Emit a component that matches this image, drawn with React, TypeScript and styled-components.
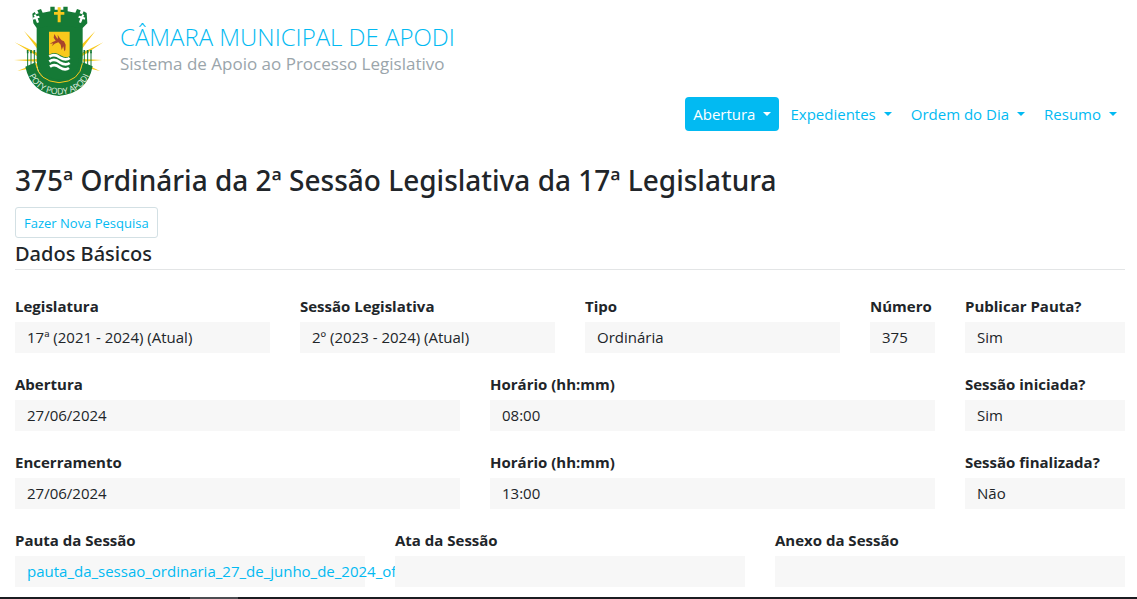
import React from "react";
import styled, { createGlobalStyle } from "styled-components";

const GlobalStyle = createGlobalStyle`
  *, *::before, *::after { box-sizing: border-box; }
  body {
    margin: 0;
    background: #fff;
    color: #212529;
    font-family: "Open Sans", "Noto Sans", sans-serif;
    font-size: 15px;
    line-height: 24px;
    font-weight: 400;
  }
`;

const Page = styled.div`
  overflow-x: hidden;
`;

const Container = styled.div`
  padding: 0 12px 10px 15px;
`;

const Brand = styled.a`
  display: flex;
  align-items: flex-start;
  width: fit-content;
  height: 97px;
  margin-left: -5px;
  gap: 10px;
  text-decoration: none;
  color: #9aa5ab;
`;

const BrandText = styled.span`
  display: flex;
  flex-direction: column;
  padding-top: 22px;
`;

const BrandName = styled.span`
  color: #02baf2;
  font-size: 24px;
  line-height: 30px;
  font-weight: 300;
`;

const BrandSub = styled.small`
  font-size: 17px;
  line-height: 24px;
`;

const Nav = styled.nav`
  display: flex;
  justify-content: flex-end;
  gap: 3px;
`;

const NavButton = styled.button<{ $active?: boolean }>`
  display: flex;
  align-items: center;
  gap: 8px;
  height: 34px;
  padding: 0 8px;
  border: 0;
  border-radius: 4px;
  background: ${(p) => (p.$active ? "#02baf2" : "transparent")};
  color: ${(p) => (p.$active ? "#fff" : "#02baf2")};
  font: inherit;
  cursor: pointer;

  &::after {
    content: "";
    border-top: 4px solid currentColor;
    border-left: 4px solid transparent;
    border-right: 4px solid transparent;
  }
`;

const Title = styled.h1`
  margin: 31px 0 9px;
  font-family: "Noto Sans", "Open Sans", sans-serif;
  font-size: 28px;
  line-height: 36px;
  font-weight: 500;
`;

const SearchButton = styled.button`
  display: block;
  height: 31px;
  padding: 0 8px;
  border: 1px solid #d3e0e4;
  border-radius: 3px;
  background: #fff;
  color: #02baf2;
  font: inherit;
  font-size: 13px;
  cursor: pointer;
`;

const Legend = styled.h2`
  margin: 2px 0 27px;
  padding-bottom: 1px;
  border-bottom: 1px solid #e3e5e6;
  font-family: "Noto Sans", "Open Sans", sans-serif;
  font-size: 20px;
  line-height: 28px;
  font-weight: 500;
`;

const Fields = styled.dl`
  display: grid;
  grid-template-columns: repeat(12, minmax(0, 1fr));
  gap: 22px 30px;
  margin: 0;
`;

const Field = styled.div<{ $span: number }>`
  grid-column: span ${(p) => p.$span};
`;

const Label = styled.dt`
  height: 25px;
  line-height: 18px;
  font-weight: 700;
  white-space: nowrap;
`;

const Value = styled.dd`
  height: 31px;
  margin: 0;
  padding: 0 12px;
  background: #f7f7f7;
  line-height: 31px;
  white-space: nowrap;
`;

const FileLink = styled.a`
  color: #02baf2;
  text-decoration: none;
`;

const Taskbar = styled.footer`
  height: 2px;
  padding-left: 190px;
  background: #1b1d21;
`;

const TaskbarItem = styled.div`
  width: 48px;
  height: 2px;
  background: #4c4e52;
`;

const Crest = () => (
  <svg width="100" height="104" viewBox="6 0 300 312" role="img" aria-label="Brasão de Apodi">
    <path
      d="M48 93 90 135 90 149ZM262 93 220 135 220 149ZM20 127 90 160 90 170ZM286 127 220 160 220 170ZM18 180 90 177 90 185ZM282 180 224 177 224 185ZM28 213 90 188 90 200ZM276 213 224 188 224 200Z"
      fill="#f8c91c"
    />
    <path
      d="M59 156V199M69 156V199M79 156V199M229 156V199M239 156V199M249 156V199"
      stroke="#157a36"
      strokeWidth="3"
    />
    <path
      d="M59 150V160M69 150V160M79 150V160M229 150V160M239 150V160M249 150V160"
      stroke="#157a36"
      strokeWidth="5"
    />
    <path
      d="M73 41 80 36 84 43 92 40 88 31 99 27 104 38 127 34V20H140V29H166V20H179V34L202 38 207 27 218 31 215 40 223 43 227 34 236 39 238 70 224 84V174Q224 250 153 258 86 250 86 174V84L76 70Z"
      fill="#157a36"
    />
    <path d="M52 200 83 187Q91 248 153 251 216 248 224 187L254 199Q238 280 153 288 69 280 52 200Z" fill="#157a36" />
    <path d="M83 190Q92 244 153 248 216 244 223 190" fill="none" stroke="#f8c91c" strokeWidth="3" />
    <path d="M94 83Q153 71 213 83V173Q213 232 153 239 94 232 94 173Z" fill="#157a36" />
    <path d="M149 22H158V36H169V44H158V67H149V44H138V36H149Z" fill="#f8c91c" />
    <path
      d="M77 45 83 43 86 49 93 47 95 53 89 55 93 67 87 69 82 57 76 59 74 53 80 51ZM229 45 223 43 220 49 213 47 211 53 217 55 213 67 219 69 224 57 230 59 232 53 226 51Z"
      fill="#fff"
    />
    <path d="M123 95H185V168Q176 177 156 165 139 154 123 164Z" fill="#f8c91c" />
    <path
      d="M139 102 145 112 150 117 149 104 155 114 161 121 168 124 173 134 172 150 169 154 166 139 161 150 158 134 151 127 140 131 131 139 136 130 125 132 134 126 143 122 137 113Z"
      fill="#a8452b"
    />
    <path
      d="M124 170Q139 160 155 172 173 183 185 174M124 185Q139 174 155 187 173 198 185 189M126 200Q139 190 155 202 171 213 183 204"
      fill="none"
      stroke="#fff"
      strokeWidth="8"
    />
    <path id="crest-ribbon" d="M56 206Q76 282 153 283 230 282 250 206" fill="none" />
    <text fill="#e8f3e8" fontFamily="Liberation Sans Narrow, Open Sans, sans-serif" fontSize="26">
      <textPath href="#crest-ribbon" startOffset="50%" textAnchor="middle">
        POTY PODY APODI
      </textPath>
    </text>
  </svg>
);

type Item = { label: string; value?: string; span: number; href?: string };

const items: Item[] = [
  { label: "Legislatura", value: "17ª (2021 - 2024) (Atual)", span: 3 },
  { label: "Sessão Legislativa", value: "2º (2023 - 2024) (Atual)", span: 3 },
  { label: "Tipo", value: "Ordinária", span: 3 },
  { label: "Número", value: "375", span: 1 },
  { label: "Publicar Pauta?", value: "Sim", span: 2 },
  { label: "Abertura", value: "27/06/2024", span: 5 },
  { label: "Horário (hh:mm)", value: "08:00", span: 5 },
  { label: "Sessão iniciada?", value: "Sim", span: 2 },
  { label: "Encerramento", value: "27/06/2024", span: 5 },
  { label: "Horário (hh:mm)", value: "13:00", span: 5 },
  { label: "Sessão finalizada?", value: "Não", span: 2 },
  { label: "Pauta da Sessão", value: "pauta_da_sessao_ordinaria_27_de_junho_de_2024_of", span: 4, href: "#pauta" },
  { label: "Ata da Sessão", span: 4 },
  { label: "Anexo da Sessão", span: 4 },
];

const menus = ["Abertura", "Expedientes", "Ordem do Dia", "Resumo"];

export default function App() {
  return (
    <Page>
      <GlobalStyle />
      <Container>
        <header>
          <Brand href="#inicio">
            <Crest />
            <BrandText>
              <BrandName>CÂMARA MUNICIPAL DE APODI</BrandName>
              <BrandSub>Sistema de Apoio ao Processo Legislativo</BrandSub>
            </BrandText>
          </Brand>
          <Nav>
            {menus.map((menu, i) => (
              <NavButton key={menu} type="button" aria-haspopup="menu" $active={i === 0}>
                {menu}
              </NavButton>
            ))}
          </Nav>
        </header>
        <main>
          <Title>375ª Ordinária da 2ª Sessão Legislativa da 17ª Legislatura</Title>
          <SearchButton type="button">Fazer Nova Pesquisa</SearchButton>
          <Legend>Dados Básicos</Legend>
          <Fields>
            {items.map((item, i) => (
              <Field key={i} $span={item.span}>
                <Label>{item.label}</Label>
                <Value>{item.href ? <FileLink href={item.href}>{item.value}</FileLink> : item.value}</Value>
              </Field>
            ))}
          </Fields>
        </main>
      </Container>
      <Taskbar>
        <TaskbarItem />
      </Taskbar>
    </Page>
  );
}
